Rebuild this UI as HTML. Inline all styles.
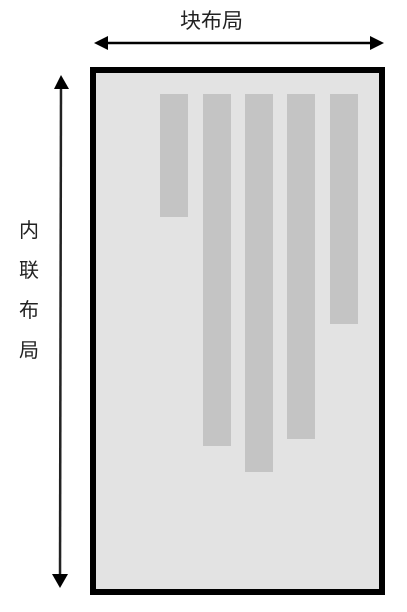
<!DOCTYPE html>
<html><head><meta charset="utf-8"><style>
html,body{margin:0;padding:0;background:#fff;width:407px;height:612px;overflow:hidden;position:relative;font-family:"Liberation Sans","Noto Sans CJK SC",sans-serif;}
.box{position:absolute;left:90px;top:67px;width:283px;height:516px;border:6px solid #000;background:#e3e3e3;}
.bar{position:absolute;top:94px;width:28px;background:#c4c4c4;}
.t{position:absolute;font-size:20px;color:#222;line-height:1;}
</style></head><body>
<div class="t" style="left:180px;top:11px;font-size:21px;">块布局</div>
<svg width="407" height="612" style="position:absolute;left:0;top:0">
<line x1="100" y1="43" x2="378" y2="43" stroke="#000" stroke-width="2.5"/>
<polygon points="94,43 108,36 108,50" fill="#000"/>
<polygon points="384,43 370,36 370,50" fill="#000"/>
<line x1="61" y1="82" x2="60" y2="582" stroke="#222" stroke-width="2.5"/>
<polygon points="61,75 54,89 69,89" fill="#000"/>
<polygon points="60,588 52,574 68,574" fill="#000"/>
</svg>
<div class="t" style="left:19px;top:221px;">内</div>
<div class="t" style="left:19px;top:261px;">联</div>
<div class="t" style="left:19px;top:301px;">布</div>
<div class="t" style="left:19px;top:341px;">局</div>
<div class="box"></div>
<div class="bar" style="left:160px;height:123px"></div>
<div class="bar" style="left:203px;height:352px"></div>
<div class="bar" style="left:245px;height:378px"></div>
<div class="bar" style="left:287px;height:345px"></div>
<div class="bar" style="left:330px;height:230px"></div>
</body></html>
